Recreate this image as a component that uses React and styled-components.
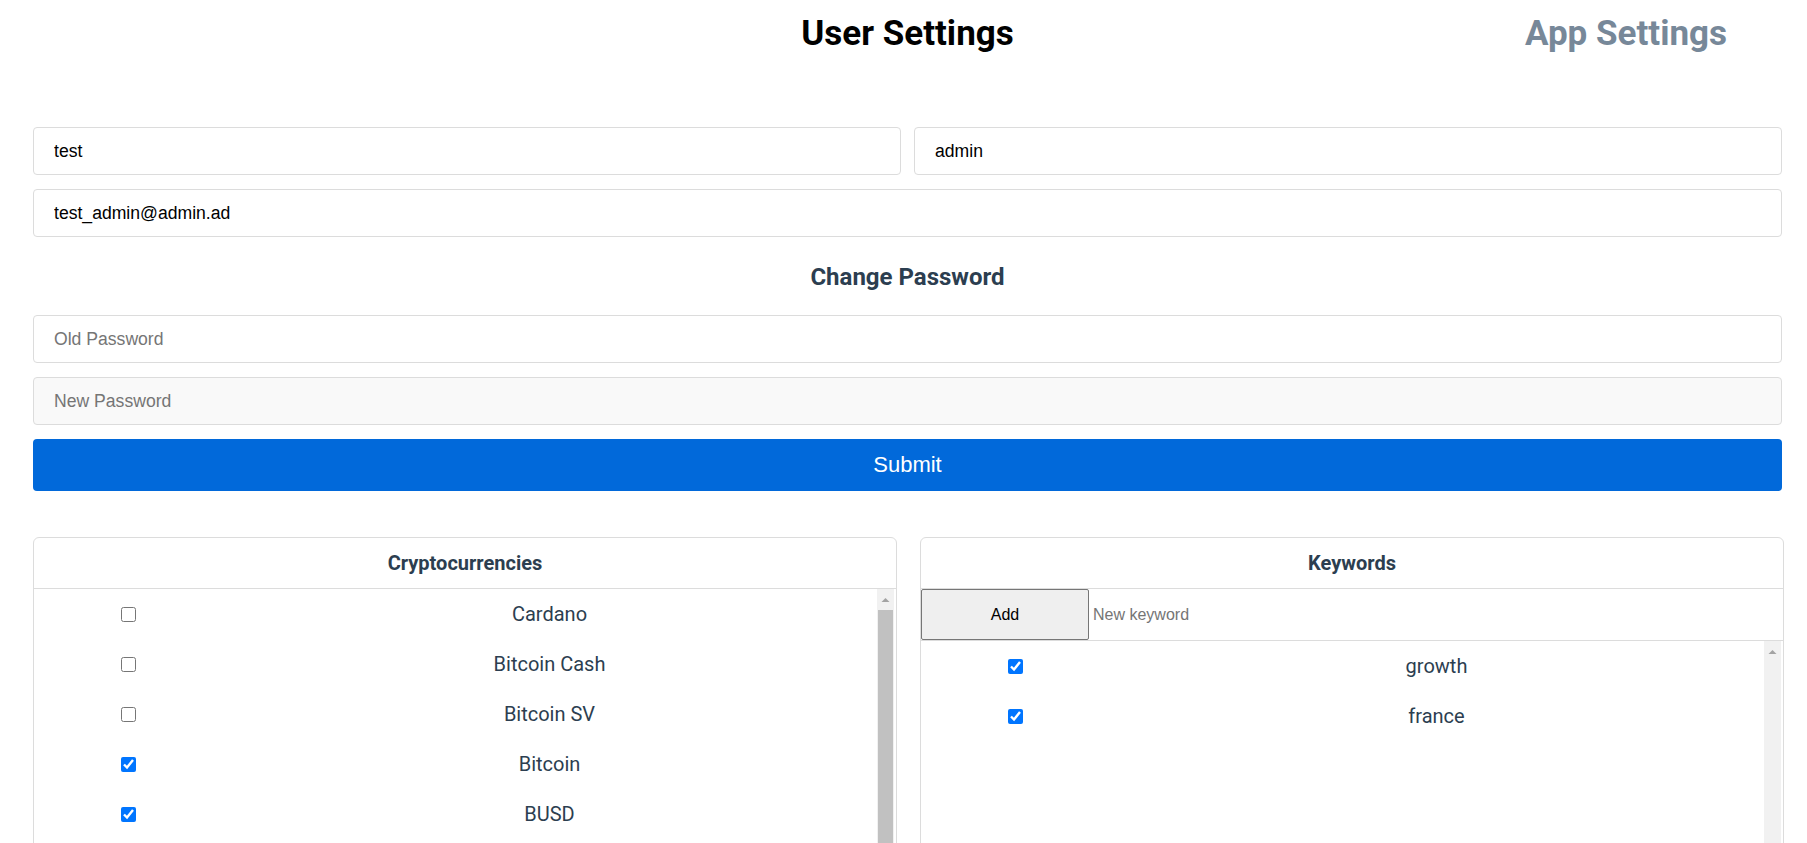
import React, { useState } from "react";
import styled, { createGlobalStyle } from "styled-components";

const GlobalStyle = createGlobalStyle`
  body {
    margin: 0;
    background: #fff;
    font-family: Roboto, "Liberation Sans", Arial, sans-serif;
  }
  * {
    box-sizing: border-box;
  }
`;

const ROW_HEIGHT = 50;
const CARD_HEIGHT = 470;
const ARROW_UP = 21;
const ARROW_DOWN = 17;

const Page = styled.div`
  padding: 0 25px 40px 33px;
`;

const Header = styled.header`
  display: grid;
  grid-template-columns: 1fr auto 1fr;
  align-items: center;
  padding-top: 15px;
  height: 53px;
`;

const Tab = styled.h1`
  margin: 0;
  font-size: 35px;
  line-height: 38px;
  font-weight: 700;
  color: ${(p) => (p.$muted ? "#778899" : "#000")};
  justify-self: ${(p) => (p.$muted ? "end" : "center")};
  padding-right: ${(p) => (p.$muted ? "55px" : "0")};
  cursor: pointer;
`;

const Form = styled.form`
  margin-top: 74px;
  display: flex;
  flex-direction: column;
  gap: 14px;
`;

const NameRow = styled.div`
  display: grid;
  grid-template-columns: 1fr 1fr;
  gap: 13px;
`;

const TextInput = styled.input`
  width: 100%;
  height: 48px;
  padding: 0 20px;
  border: 1px solid #dcdcdc;
  border-radius: 4px;
  background: ${(p) => (p.$shaded ? "#f9f9f9" : "#fff")};
  font-family: "Liberation Sans", Arial, sans-serif;
  font-size: 17.6px;
  color: #000;
  outline: none;

  &::placeholder {
    color: #757575;
  }
`;

const SectionTitle = styled.h2`
  margin: 12px 0 10px;
  text-align: center;
  font-size: 24px;
  line-height: 28px;
  font-weight: 700;
  color: #2c3e50;
`;

const SubmitButton = styled.button`
  height: 52px;
  border: none;
  border-radius: 4px;
  background: #0169da;
  color: #fff;
  font-family: "Liberation Sans", Arial, sans-serif;
  font-size: 22px;
  cursor: pointer;
`;

const Cards = styled.div`
  margin-top: 46px;
  display: grid;
  grid-template-columns: 1fr 1fr;
  gap: 23px;
  margin-right: -2px;
`;

const Card = styled.section`
  height: ${CARD_HEIGHT}px;
  border: 1px solid #dcdcdc;
  border-radius: 6px;
  display: flex;
  flex-direction: column;
  overflow: hidden;
`;

const CardHeader = styled.div`
  height: 51px;
  flex-shrink: 0;
  display: flex;
  align-items: center;
  justify-content: center;
  border-bottom: 1px solid #dcdcdc;
  font-size: 20px;
  font-weight: 700;
  color: #2c3e50;
`;

const AddRow = styled.div`
  display: flex;
  height: 52px;
  flex-shrink: 0;
  border-bottom: 1px solid #dcdcdc;
`;

const AddButton = styled.button`
  width: 168px;
  height: 51px;
  background: #efefef;
  border: 1px solid #767676;
  border-radius: 2px;
  font-family: "Liberation Sans", Arial, sans-serif;
  font-size: 16px;
  color: #000;
  cursor: pointer;
`;

const KeywordInput = styled.input`
  flex: 1;
  border: none;
  outline: none;
  padding: 0 4px;
  font-family: "Liberation Sans", Arial, sans-serif;
  font-size: 16px;

  &::placeholder {
    color: #757575;
  }
`;

const ListFrame = styled.div`
  flex: 1;
  min-height: 0;
  display: flex;
  padding-right: 2px;
`;

const List = styled.div`
  flex: 1;
  overflow-y: auto;
  scrollbar-width: none;

  &::-webkit-scrollbar {
    display: none;
  }
`;

const ScrollBar = styled.div`
  width: 17px;
  flex-shrink: 0;
  background: #f1f1f1;
  display: flex;
  flex-direction: column;
`;

const ScrollArrow = styled.svg`
  display: block;
  width: 17px;
  height: ${(p) => p.$h}px;
  flex-shrink: 0;
`;

const ScrollThumb = styled.div`
  width: 15px;
  margin-left: 1px;
  background: #c1c1c1;
  flex-shrink: 0;
`;

const Item = styled.label`
  display: grid;
  grid-template-columns: 188px 1fr;
  align-items: center;
  height: ${ROW_HEIGHT}px;
  font-size: 20px;
  color: #2c3e50;
  cursor: pointer;

  input {
    justify-self: center;
    margin: 0;
    width: 15px;
    height: 15px;
  }

  span {
    text-align: center;
  }
`;

const cryptos = [
  { name: "Cardano", checked: false },
  { name: "Bitcoin Cash", checked: false },
  { name: "Bitcoin SV", checked: false },
  { name: "Bitcoin", checked: true },
  { name: "BUSD", checked: true },
  { name: "Dogecoin", checked: false },
  { name: "Ethereum", checked: true },
  { name: "Litecoin", checked: false },
  { name: "Polkadot", checked: false },
  { name: "Solana", checked: false },
  { name: "Tether", checked: false },
  { name: "XRP", checked: false },
];

function CheckList({ items, onToggle, viewport }) {
  const content = items.length * ROW_HEIGHT;
  const track = viewport - ARROW_UP - ARROW_DOWN;
  const thumb = content > viewport ? Math.round((track * viewport) / content) : 0;

  return (
    <ListFrame>
      <List>
        {items.map((it, i) => (
          <Item key={it.name}>
            <input type="checkbox" checked={it.checked} onChange={() => onToggle(i)} />
            <span>{it.name}</span>
          </Item>
        ))}
      </List>
      <ScrollBar>
        <ScrollArrow $h={ARROW_UP} viewBox={`0 0 17 ${ARROW_UP}`}>
          <path d="M4.5 13h8L8.5 9z" fill="#a3a3a3" />
        </ScrollArrow>
        {thumb > 0 && <ScrollThumb style={{ height: thumb }} />}
      </ScrollBar>
    </ListFrame>
  );
}

export default function App() {
  const [coins, setCoins] = useState(cryptos);
  const [keywords, setKeywords] = useState([
    { name: "growth", checked: true },
    { name: "france", checked: true },
  ]);
  const [draft, setDraft] = useState("");

  const toggle = (setter) => (i) =>
    setter((list) => list.map((it, j) => (j === i ? { ...it, checked: !it.checked } : it)));

  const addKeyword = () => {
    if (!draft.trim()) return;
    setKeywords((k) => [...k, { name: draft.trim(), checked: true }]);
    setDraft("");
  };

  return (
    <Page>
      <GlobalStyle />
      <Header>
        <div />
        <Tab>User Settings</Tab>
        <Tab $muted>App Settings</Tab>
      </Header>

      <Form onSubmit={(e) => e.preventDefault()}>
        <NameRow>
          <TextInput defaultValue="test" />
          <TextInput defaultValue="admin" />
        </NameRow>
        <TextInput defaultValue="test_admin@admin.ad" />
        <SectionTitle>Change Password</SectionTitle>
        <TextInput type="password" placeholder="Old Password" />
        <TextInput type="password" placeholder="New Password" $shaded />
        <SubmitButton type="submit">Submit</SubmitButton>
      </Form>

      <Cards>
        <Card>
          <CardHeader>Cryptocurrencies</CardHeader>
          <CheckList items={coins} onToggle={toggle(setCoins)} viewport={CARD_HEIGHT - 53} />
        </Card>
        <Card>
          <CardHeader>Keywords</CardHeader>
          <AddRow>
            <AddButton type="button" onClick={addKeyword}>Add</AddButton>
            <KeywordInput
              placeholder="New keyword"
              value={draft}
              onChange={(e) => setDraft(e.target.value)}
            />
          </AddRow>
          <CheckList items={keywords} onToggle={toggle(setKeywords)} viewport={CARD_HEIGHT - 105} />
        </Card>
      </Cards>
    </Page>
  );
}
